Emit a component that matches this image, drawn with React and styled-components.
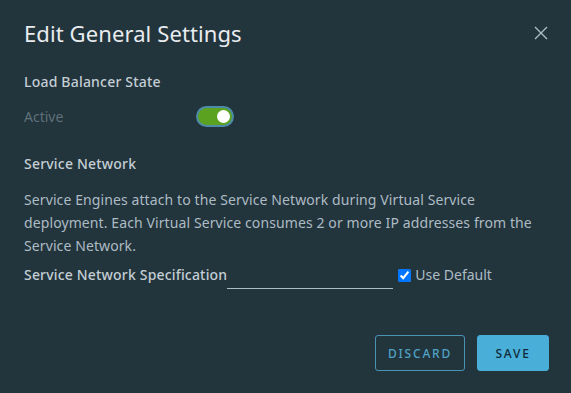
import React, { useState } from 'react';
import styled, { createGlobalStyle } from 'styled-components';

const GlobalStyle = createGlobalStyle`
  html, body {
    margin: 0;
    padding: 0;
    background: #22343c;
  }
  body {
    font-family: "Noto Sans", "Open Sans", sans-serif;
  }
`;

const App = () => {
  const [active, setActive] = useState(true);
  const [useDefault, setUseDefault] = useState(true);

  return (
    <>
      <GlobalStyle />
      <StyledModal>
        <StyledHeader>
          <StyledTitle>Edit General Settings</StyledTitle>
          <StyledClose aria-label="Close">
            <svg width="14" height="14" viewBox="0 0 14 14">
              <path d="M1 1 L13 13 M13 1 L1 13" stroke="#adbbc4" strokeWidth="1.4" fill="none" />
            </svg>
          </StyledClose>
        </StyledHeader>

        <StyledSectionLabel>Load Balancer State</StyledSectionLabel>
        <StyledToggleRow>
          <StyledMuted>Active</StyledMuted>
          <StyledToggle $on={active} onClick={() => setActive(!active)}>
            <StyledKnob $on={active} />
          </StyledToggle>
        </StyledToggleRow>

        <StyledSectionLabel $top={18}>Service Network</StyledSectionLabel>
        <StyledParagraph>
          Service Engines attach to the Service Network during Virtual Service deployment. Each
          Virtual Service consumes 2 or more IP addresses from the Service Network.
        </StyledParagraph>

        <StyledSpecRow>
          <StyledSpecLabel>Service Network Specification</StyledSpecLabel>
          <StyledInput type="text" />
          <StyledCheckLabel>
            <StyledCheckbox
              type="checkbox"
              checked={useDefault}
              onChange={() => setUseDefault(!useDefault)}
            />
            Use Default
          </StyledCheckLabel>
        </StyledSpecRow>

        <StyledFooter>
          <StyledButton $variant="outline">Discard</StyledButton>
          <StyledButton $variant="primary">Save</StyledButton>
        </StyledFooter>
      </StyledModal>
    </>
  );
};

export default App;

// Styled components

const StyledModal = styled.div`
  width: 571px;
  height: 393px;
  box-sizing: border-box;
  padding: 18px 22px 22px 24px;
  background: #22343c;
  color: #adbbc4;
  display: flex;
  flex-direction: column;
`;

const StyledHeader = styled.div`
  display: flex;
  justify-content: space-between;
  align-items: center;
  height: 30px;
`;

const StyledTitle = styled.h2`
  margin: 0;
  font-size: 22px;
  font-weight: 400;
  letter-spacing: 0.1px;
  color: #e9ecef;
`;

const StyledClose = styled.button`
  background: none;
  border: none;
  padding: 0;
  width: 16px;
  height: 16px;
  display: flex;
  align-items: center;
  justify-content: center;
  cursor: pointer;
`;

const StyledSectionLabel = styled.div`
  margin-top: ${(p) => p.$top || 19}px;
  font-size: 14px;
  font-weight: 500;
  letter-spacing: 0.2px;
  color: #c4ced4;
  line-height: 30px;
`;

const StyledToggleRow = styled.div`
  display: flex;
  align-items: center;
  height: 30px;
  margin-top: 4px;
`;

const StyledMuted = styled.span`
  width: 174px;
  font-size: 14px;
  color: #5f717a;
`;

const StyledToggle = styled.div`
  width: 34px;
  height: 17px;
  border-radius: 10px;
  background: ${(p) => (p.$on ? '#5aa220' : '#565656')};
  box-shadow: 0 0 0 2px #4d8ba8;
  position: relative;
  cursor: pointer;
`;

const StyledKnob = styled.div`
  position: absolute;
  top: 2px;
  left: ${(p) => (p.$on ? '19px' : '2px')};
  width: 13px;
  height: 13px;
  border-radius: 50%;
  background: #ffffff;
`;

const StyledParagraph = styled.p`
  margin: 9px 0 0;
  font-size: 14px;
  letter-spacing: 0.1px;
  line-height: 23px;
  color: #adbbc4;
`;

const StyledSpecRow = styled.div`
  display: flex;
  align-items: flex-end;
  margin-top: 4px;
  height: 24px;
`;

const StyledSpecLabel = styled.span`
  font-size: 14px;
  font-weight: 500;
  letter-spacing: 0.18px;
  color: #c4ced4;
  line-height: 20px;
`;

const StyledInput = styled.input`
  width: 166px;
  height: 18px;
  margin-left: 0;
  margin-bottom: -4px;
  padding: 0;
  background: transparent;
  border: none;
  border-bottom: 1px solid #adbbc4;
  color: #e9ecef;
  outline: none;
`;

const StyledCheckLabel = styled.label`
  display: flex;
  align-items: center;
  gap: 4px;
  margin-left: 5px;
  font-size: 14px;
  color: #adbbc4;
  line-height: 20px;
`;

const StyledCheckbox = styled.input`
  margin: 0;
  width: 13px;
  height: 13px;
  accent-color: #0075ff;
`;

const StyledFooter = styled.div`
  margin-top: auto;
  display: flex;
  justify-content: flex-end;
  gap: 12px;
`;

const StyledButton = styled.button`
  height: 36px;
  width: ${(p) => (p.$variant === 'primary' ? '72px' : '90px')};
  box-sizing: border-box;
  padding: 0;
  border-radius: 3px;
  font-family: "Noto Sans", sans-serif;
  font-size: 12px;
  font-weight: 500;
  letter-spacing: 1.8px;
  text-transform: uppercase;
  cursor: pointer;
  background: ${(p) => (p.$variant === 'primary' ? '#49afd9' : 'transparent')};
  color: ${(p) => (p.$variant === 'primary' ? '#0e2a38' : '#4fa3c6')};
  border: 1px solid ${(p) => (p.$variant === 'primary' ? '#49afd9' : '#4a93b3')};
`;
